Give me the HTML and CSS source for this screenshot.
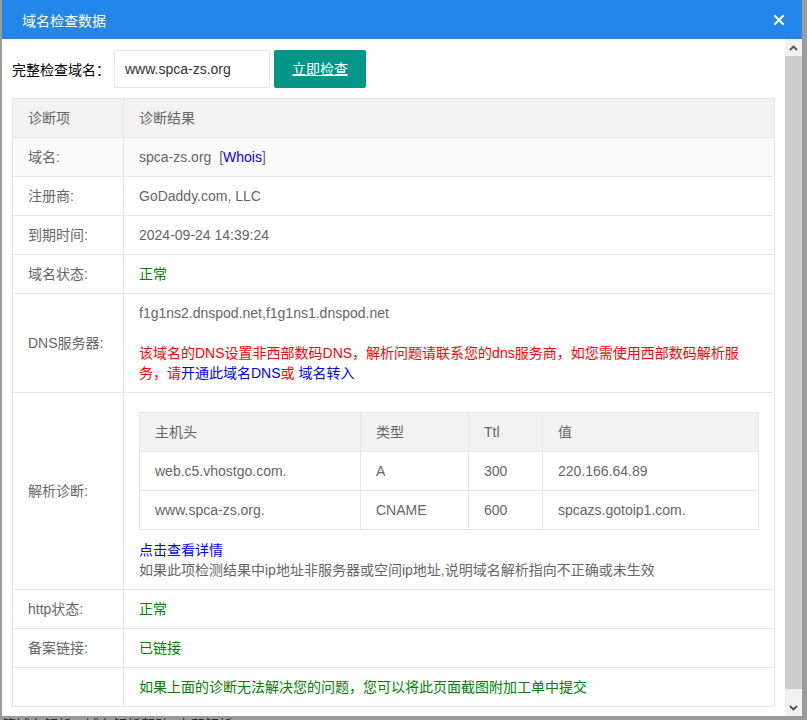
FILE: index.html
```html
<!DOCTYPE html>
<html lang="zh-CN">
<head>
<meta charset="utf-8">
<title>域名检查数据</title>
<link rel="stylesheet" href="styles.css">
</head>
<body>
<div class="dialog">
  <div class="dlg-title">
    <span class="dlg-title-text">域名检查数据</span>
    <svg class="dlg-close" width="10" height="10" viewBox="0 0 10 10"><path d="M1 1L9 9M9 1L1 9" stroke="#fff" stroke-width="2" stroke-linecap="square"/></svg>
  </div>
  <div class="dlg-body">
    <div class="dlg-content">
      <div class="search-row">
        <span class="search-label">完整检查域名：</span>
        <span class="search-input">www.spca-zs.org</span>
        <span class="search-btn">立即检查</span>
      </div>
      <table class="diag">
        <colgroup><col class="c1"><col></colgroup>
        <thead>
          <tr><th>诊断项</th><th>诊断结果</th></tr>
        </thead>
        <tbody>
          <tr class="hl"><td>域名:</td><td>spca-zs.org&nbsp;&nbsp;[<a class="blue">Whois</a>]</td></tr>
          <tr><td>注册商:</td><td>GoDaddy.com, LLC</td></tr>
          <tr><td>到期时间:</td><td>2024-09-24 14:39:24</td></tr>
          <tr><td>域名状态:</td><td class="green">正常</td></tr>
          <tr>
            <td>DNS服务器:</td>
            <td>
              <div>f1g1ns2.dnspod.net,f1g1ns1.dnspod.net</div>
              <div class="blank"></div>
              <div class="red notice">该域名的DNS设置非西部数码DNS，解析问题请联系您的dns服务商，如您需使用西部数码解析服务，请<a class="blue">开通此域名DNS</a>或 <a class="blue">域名转入</a></div>
            </td>
          </tr>
          <tr>
            <td>解析诊断:</td>
            <td>
              <table class="inner">
                <colgroup><col class="i1"><col class="i2"><col class="i3"><col></colgroup>
                <thead><tr><th>主机头</th><th>类型</th><th>Ttl</th><th>值</th></tr></thead>
                <tbody>
                  <tr><td>web.c5.vhostgo.com.</td><td>A</td><td>300</td><td>220.166.64.89</td></tr>
                  <tr><td>www.spca-zs.org.</td><td>CNAME</td><td>600</td><td>spcazs.gotoip1.com.</td></tr>
                </tbody>
              </table>
              <div><a class="blue">点击查看详情</a></div>
              <div class="tip">如果此项检测结果中ip地址非服务器或空间ip地址,说明域名解析指向不正确或未生效</div>
            </td>
          </tr>
          <tr><td>http状态:</td><td class="green">正常</td></tr>
          <tr><td>备案链接:</td><td class="green">已链接</td></tr>
          <tr><td></td><td class="green">如果上面的诊断无法解决您的问题，您可以将此页面截图附加工单中提交</td></tr>
        </tbody>
      </table>
    </div>
    <div class="scrollbar">
      <div class="sb-arrow"><svg width="9" height="6" viewBox="0 0 9 6"><path d="M1 5L4.5 1.5L8 5" fill="none" stroke="#505050" stroke-width="1.8"/></svg></div>
      <div class="sb-thumb"></div>
      <div class="sb-track"></div>
      <div class="sb-arrow"><svg width="9" height="6" viewBox="0 0 9 6"><path d="M1 1L4.5 4.5L8 1" fill="none" stroke="#505050" stroke-width="1.8"/></svg></div>
    </div>
  </div>
</div>
<div class="page-behind">签域名解析<span class="sq"></span>域名解析帮助&nbsp;&nbsp;立即解析</div>
</body>
</html>
```

FILE: styles.css
```css
html, body {
  margin: 0;
  padding: 0;
}
body {
  background: #9b9b9b;
  font-family: "Liberation Sans", "Noto Sans CJK SC", sans-serif;
  font-size: 14px;
  overflow: hidden;
  height: 720px;
  padding-left: 2px;
}
.dialog {
  width: 800px;
  height: 716px;
  background: #fff;
  display: flex;
  flex-direction: column;
}
.dlg-title {
  height: 39px;
  flex: none;
  background: #2287e8;
  color: #fff;
  display: flex;
  align-items: center;
  padding-left: 20px;
  padding-right: 18px;
}
.dlg-title-text {
  flex: 1;
  font-size: 14px;
  padding-top: 1px;
}
.dlg-close {
  display: block;
}
.dlg-body {
  flex: 1;
  display: flex;
  min-height: 0;
}
.dlg-content {
  flex: 1;
  padding: 11px 10px 0;
  overflow: hidden;
}
.search-row {
  display: flex;
  align-items: center;
  height: 38px;
}
.search-label {
  color: #000;
  width: 102px;
}
.search-input {
  box-sizing: border-box;
  width: 156px;
  height: 38px;
  border: 1px solid #e6e6e6;
  padding-left: 10px;
  line-height: 36px;
  color: #333;
}
.search-btn {
  margin-left: 4px;
  height: 38px;
  line-height: 38px;
  padding: 0 18px;
  background: #009688;
  color: #fff;
  border-radius: 2px;
  text-decoration: underline;
}
table {
  border-collapse: collapse;
  table-layout: fixed;
}
.diag {
  width: 763px;
  margin-top: 10px;
}
.diag .c1 { width: 111px; }
th, td {
  border: 1px solid #e6e6e6;
  padding: 9px 15px;
  line-height: 20px;
  color: #666;
  font-weight: normal;
  text-align: left;
  vertical-align: middle;
}
thead th {
  background: #f2f2f2;
}
tr.hl td {
  background: #fafafa;
}
.blank { height: 20px; }
.notice { width: 600px; }
.red { color: #f00; }
td.green, .green { color: #008000; }
.blue { color: #00f; }
.inner {
  width: 620px;
  margin: 10px 0;
}
.inner .i1 { width: 221px; }
.inner .i2 { width: 108px; }
.inner .i3 { width: 74px; }
.tip { color: #666; }
.scrollbar {
  width: 17px;
  flex: none;
  display: flex;
  flex-direction: column;
  background: #f1f1f1;
}
.sb-arrow {
  height: 17px;
  display: flex;
  align-items: center;
  justify-content: center;
  flex: none;
}
.sb-thumb {
  height: 633px;
  background: #cdcdcd;
  flex: none;
}
.sb-track {
  flex: 1;
}
.page-behind {
  margin-top: 1px;
  color: #2b2b2b;
  font-size: 14px;
  line-height: 16px;
  white-space: nowrap;
}
.sq {
  display: inline-block;
  width: 9px;
  height: 9px;
  background: #1f4f9a;
  margin: 0 2px;
}
```
